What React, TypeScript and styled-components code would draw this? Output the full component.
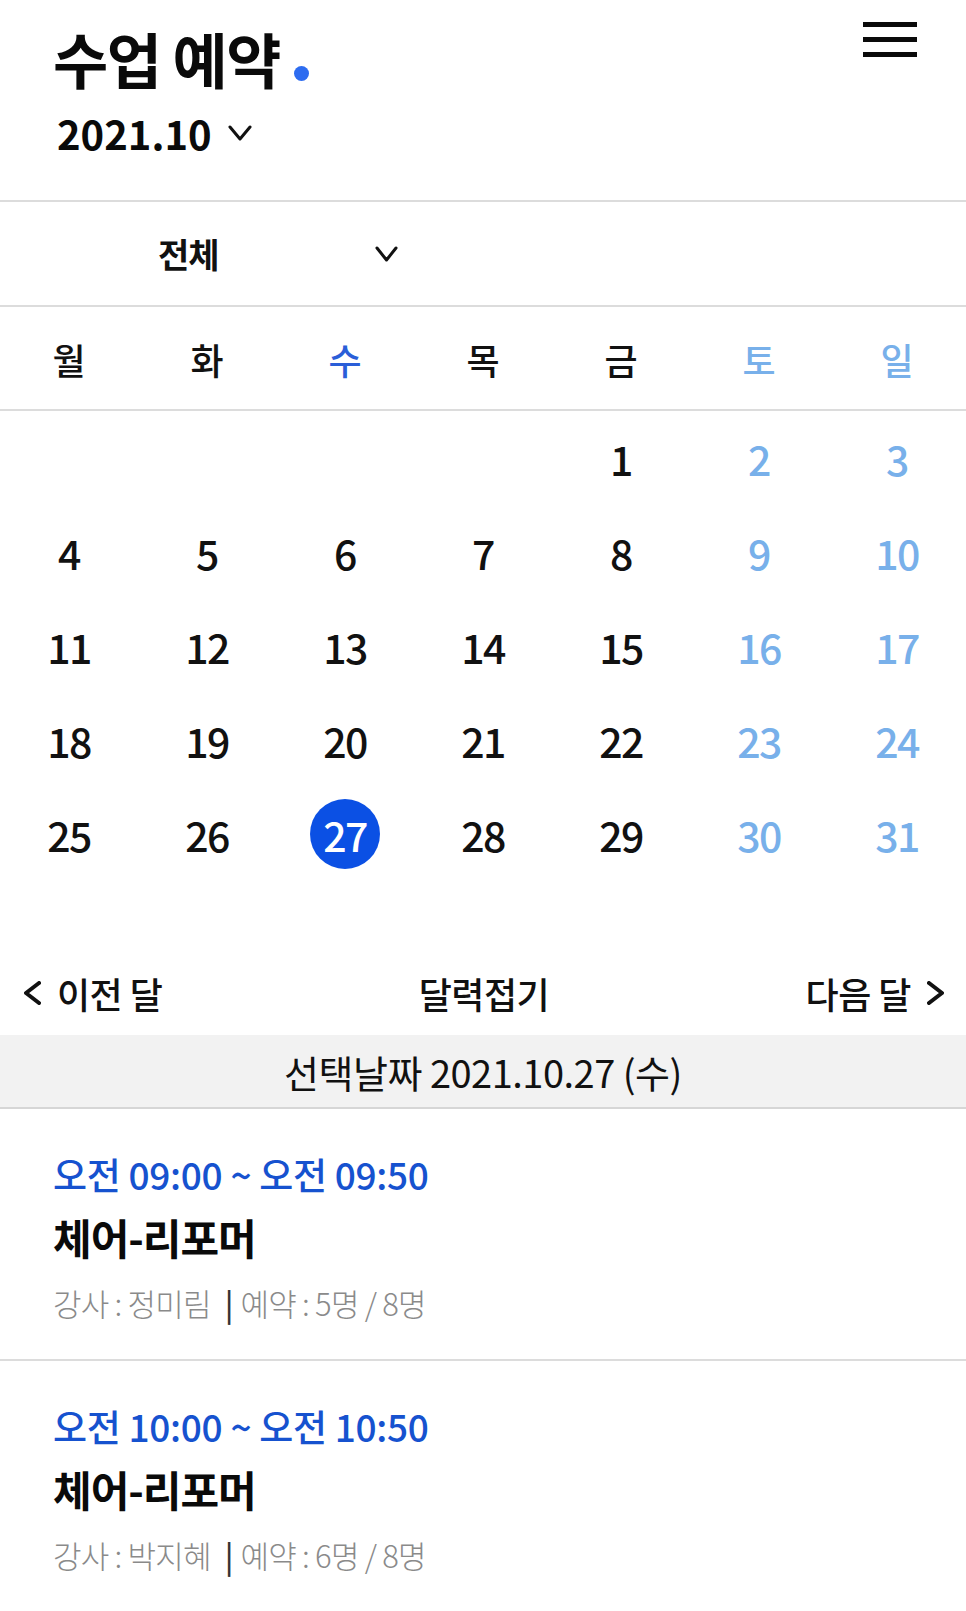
import styled, { createGlobalStyle } from "styled-components";

const GlobalStyle = createGlobalStyle`
	html, body {
		margin: 0;
		padding: 0;
		background: #ffffff;
	}
	body {
		font-family: "Noto Sans CJK KR", "Noto Sans", sans-serif;
		color: #111111;
	}
	* {
		box-sizing: border-box;
	}
`;

const Page = styled.div`
	width: 966px;
	display: flex;
	flex-direction: column;
`;

const Header = styled.header`
	height: 202px;
	display: flex;
	justify-content: space-between;
	align-items: flex-start;
	padding: 0 49px 0 53px;
	border-bottom: 2px solid #dcdcdc;
`;

const TitleBlock = styled.div`
	display: flex;
	flex-direction: column;
`;

const Title = styled.h1`
	margin: 18px 0 0;
	display: flex;
	align-items: flex-end;
	font-size: 60px;
	line-height: 80px;
	font-weight: 700;
	letter-spacing: -1.5px;
	color: #0a0a0a;
`;

const Dot = styled.span`
	width: 15px;
	height: 15px;
	border-radius: 50%;
	background: #2d6cf0;
	margin: 0 0 17px 14px;
`;

const MonthPicker = styled.button`
	margin-top: 10px;
	padding: 0 0 0 4px;
	display: flex;
	align-items: center;
	gap: 16px;
	border: none;
	background: none;
	font-family: inherit;
	font-size: 40px;
	line-height: 50px;
	font-weight: 700;
	color: #0a0a0a;
	letter-spacing: 0px;
`;

const Hamburger = styled.button`
	margin-top: 22px;
	width: 54px;
	padding: 0;
	border: none;
	background: none;
	display: flex;
	flex-direction: column;
	gap: 10px;

	span {
		display: block;
		height: 5px;
		background: #0a0a0a;
	}
`;

const FilterRow = styled.div`
	height: 105px;
	display: flex;
	align-items: center;
	padding-left: 158px;
	border-bottom: 2px solid #dcdcdc;
`;

const FilterSelect = styled.button`
	width: 240px;
	display: flex;
	justify-content: space-between;
	align-items: center;
	padding: 0;
	border: none;
	background: none;
	font-family: inherit;
	font-size: 34px;
	font-weight: 700;
	color: #111111;
	letter-spacing: -1px;
`;

const WeekRow = styled.div`
	height: 104px;
	display: grid;
	grid-template-columns: repeat(7, 1fr);
	align-items: center;
	border-bottom: 2px solid #dcdcdc;
`;

const WeekDay = styled.div<{ $tone: string }>`
	text-align: center;
	font-size: 36px;
	font-weight: 500;
	color: ${(p) => p.$tone};
	padding-top: 2px;
`;

const DateGrid = styled.div`
	display: grid;
	grid-template-columns: repeat(7, 1fr);
	grid-auto-rows: 94px;
	padding-bottom: 74px;
`;

const DateCell = styled.div`
	display: flex;
	justify-content: center;
	align-items: center;
`;

const DateNum = styled.span<{ $tone: string; $selected?: boolean }>`
	width: 70px;
	height: 70px;
	border-radius: 50%;
	display: flex;
	justify-content: center;
	align-items: center;
	font-size: 41px;
	font-weight: 500;
	letter-spacing: -1.5px;
	color: ${(p) => (p.$selected ? "#ffffff" : p.$tone)};
	background: ${(p) => (p.$selected ? "#0b50e4" : "transparent")};
`;

const NavRow = styled.div`
	height: 80px;
	display: flex;
	justify-content: space-between;
	align-items: center;
	padding: 0 22px 4px 24px;
`;

const NavButton = styled.button`
	display: flex;
	align-items: center;
	gap: 16px;
	padding: 0;
	border: none;
	background: none;
	font-family: inherit;
	font-size: 36px;
	font-weight: 500;
	color: #111111;
	letter-spacing: -0.5px;
`;

const SelectedBar = styled.div`
	height: 74px;
	display: flex;
	justify-content: center;
	align-items: center;
	background: #f2f2f2;
	border-bottom: 2px solid #d6d6d6;
	font-size: 38px;
	font-weight: 400;
	color: #111111;
	letter-spacing: -0.5px;
`;

const ClassItem = styled.div`
	display: flex;
	flex-direction: column;
	padding: 42px 53px 36px;
	border-bottom: 2px solid #dcdcdc;

	&:last-child {
		border-bottom: none;
	}
`;

const ClassTime = styled.div`
	font-size: 37px;
	line-height: 46px;
	font-weight: 500;
	color: #1652cf;
	letter-spacing: -0.3px;
`;

const ClassName = styled.div`
	margin-top: 14px;
	font-size: 42px;
	line-height: 52px;
	font-weight: 700;
	color: #0a0a0a;
	letter-spacing: -1px;
`;

const ClassInfo = styled.div`
	margin-top: 20px;
	font-size: 31px;
	line-height: 40px;
	font-weight: 300;
	color: #8a8a8a;
	letter-spacing: -0.8px;
`;

const Bar = styled.span`
	color: #333333;
	font-weight: 500;
	margin: 0 8px 0 14px;
`;

function Chevron({ dir, w, h, stroke }: { dir: "down" | "left" | "right"; w: number; h: number; stroke: number }) {
	const pts =
		dir === "down"
			? `2,2 ${w / 2},${h - 2} ${w - 2},2`
			: dir === "left"
			? `${w - 2},2 2,${h / 2} ${w - 2},${h - 2}`
			: `2,2 ${w - 2},${h / 2} 2,${h - 2}`;
	return (
		<svg width={w} height={h} viewBox={`0 0 ${w} ${h}`} fill="none">
			<polyline points={pts} stroke="#111111" strokeWidth={stroke} strokeLinecap="round" strokeLinejoin="round" />
		</svg>
	);
}

const weekdays = ["월", "화", "수", "목", "금", "토", "일"];
const weekend = "#78b0ea";

const dayTone = (i: number) => (i >= 5 ? weekend : i === 2 ? "#2a5ed8" : "#111111");

const cells: (number | null)[] = [null, null, null, null, ...Array.from({ length: 31 }, (_, i) => i + 1)];

const classes = [
	{ time: "오전 09:00 ~ 오전 09:50", name: "체어-리포머", teacher: "정미림", count: 5, max: 8 },
	{ time: "오전 10:00 ~ 오전 10:50", name: "체어-리포머", teacher: "박지혜", count: 6, max: 8 },
];

export default function App() {
	return (
		<Page>
			<GlobalStyle />
			<Header>
				<TitleBlock>
					<Title>
						수업 예약
						<Dot />
					</Title>
					<MonthPicker>
						2021.10
						<Chevron dir="down" w={24} h={16} stroke={3} />
					</MonthPicker>
				</TitleBlock>
				<Hamburger aria-label="menu">
					<span />
					<span />
					<span />
				</Hamburger>
			</Header>

			<FilterRow>
				<FilterSelect>
					전체
					<Chevron dir="down" w={23} h={16} stroke={3} />
				</FilterSelect>
			</FilterRow>

			<WeekRow>
				{weekdays.map((d, i) => (
					<WeekDay key={d} $tone={dayTone(i)}>
						{d}
					</WeekDay>
				))}
			</WeekRow>

			<DateGrid>
				{cells.map((n, i) => (
					<DateCell key={i}>
						{n && (
							<DateNum $tone={i % 7 >= 5 ? weekend : "#111111"} $selected={n === 27}>
								{n}
							</DateNum>
						)}
					</DateCell>
				))}
			</DateGrid>

			<NavRow>
				<NavButton>
					<Chevron dir="left" w={17} h={24} stroke={4} />
					이전 달
				</NavButton>
				<NavButton>달력접기</NavButton>
				<NavButton>
					다음 달
					<Chevron dir="right" w={17} h={24} stroke={4} />
				</NavButton>
			</NavRow>

			<SelectedBar>선택날짜 2021.10.27 (수)</SelectedBar>

			{classes.map((c, i) => (
				<ClassItem key={i}>
					<ClassTime>{c.time}</ClassTime>
					<ClassName>{c.name}</ClassName>
					<ClassInfo>
						강사 : {c.teacher}
						<Bar>|</Bar>
						예약 : {c.count}명 / {c.max}명
					</ClassInfo>
				</ClassItem>
			))}
		</Page>
	);
}
